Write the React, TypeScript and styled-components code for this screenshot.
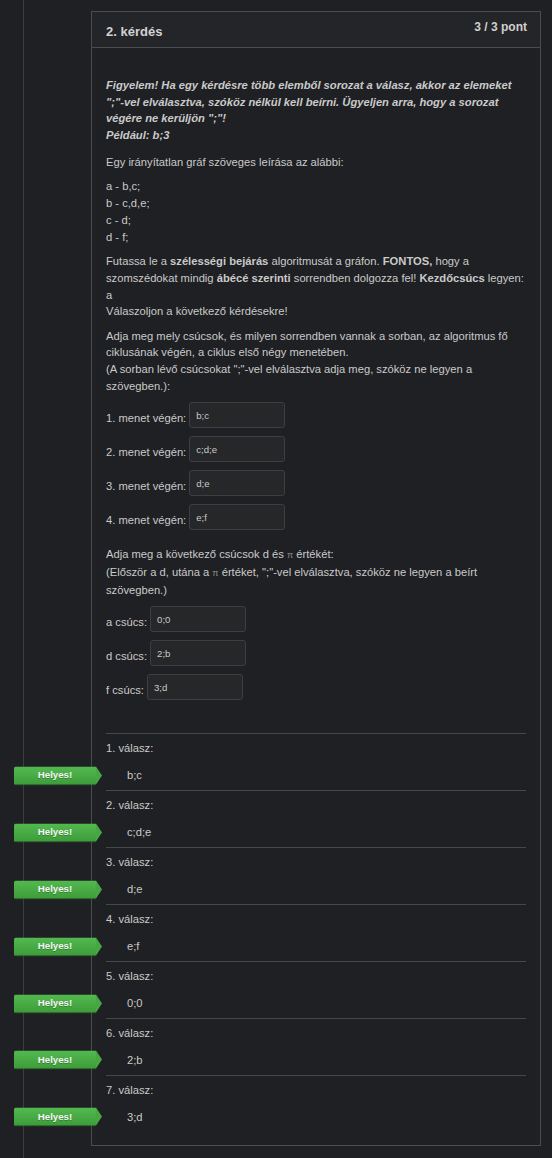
import React from "react";
import styled, { createGlobalStyle } from "styled-components";

const GlobalStyle = createGlobalStyle`
  html, body {
    margin: 0;
    padding: 0;
    background: #1f2023;
  }
  body {
    font-family: "Liberation Sans", Arial, sans-serif;
    color: #cacaca;
    -webkit-font-smoothing: antialiased;
  }
  * { box-sizing: border-box; }
`;

const Page = styled.div`
  position: relative;
  min-height: 1158px;
  padding: 11px 12px 0 91px;
  &::before {
    content: "";
    position: absolute;
    left: 23px;
    top: 0;
    bottom: 0;
    width: 1px;
    background: #3c3d40;
  }
`;

const Panel = styled.section`
  width: 450px;
  border: 1px solid #4b4c4f;
`;

const Header = styled.header`
  display: flex;
  justify-content: space-between;
  align-items: flex-start;
  height: 36px;
  padding: 0 13px 0 14px;
  background: #242528;
  border-bottom: 1px solid #4b4c4f;
`;

const Title = styled.h3`
  margin: 12px 0 0;
  font-size: 13px;
  line-height: 16px;
  font-weight: bold;
  color: #d2d2d2;
`;

const Grade = styled.div`
  margin-top: 8px;
  font-size: 12px;
  line-height: 14px;
  font-weight: bold;
  color: #cfcfcf;
`;

const Body = styled.div`
  padding: 29px 14px 13px;
  font-size: 11.2px;
  line-height: 16.8px;
`;

const Notice = styled.p`
  margin: 0 0 11px;
  font-weight: bold;
  font-style: italic;
  line-height: 16.5px;
`;

const Para = styled.p`
  margin: 0 0 7.5px;
`;

const Lines = styled.div`
  margin: 0 0 7.5px;
`;

const Line = styled.div``;

const Pi = styled.span`
  font-size: 9px;
  color: #8d8d8d;
`;

const Rows = styled.div<{ $after: number }>`
  display: flex;
  flex-direction: column;
  gap: 8px;
  margin: 1px 0 ${(p) => p.$after}px;
`;

const Row = styled.label`
  display: flex;
  align-items: center;
  gap: 3px;
`;

const RowLabel = styled.span`
  padding-top: 6px;
`;

const Field = styled.input`
  width: 96px;
  height: 26px;
  padding: 0 6px;
  background: #262729;
  border: 1px solid #3d3e41;
  border-radius: 3px;
  color: #cacaca;
  font-family: "Liberation Sans", Arial, sans-serif;
  font-size: 9.6px;
  outline: none;
`;

const Feedback = styled.div``;

const AnswerBlock = styled.div`
  border-top: 1px solid #46474a;
  padding: 6px 0 6.2px;
`;

const AnswerLabel = styled.div`
  margin-bottom: 10.2px;
`;

const AnswerValue = styled.div`
  position: relative;
  padding-left: 21px;
`;

const Badge = styled.span`
  position: absolute;
  left: -92px;
  top: 50%;
  transform: translateY(-50%);
  width: 82px;
  height: 19px;
  display: flex;
  align-items: center;
  justify-content: center;
  background: linear-gradient(#53ba4f, #3d9c3a);
  border-bottom: 1px solid #2e7a2b;
  border-radius: 2px 0 0 2px;
  color: #f4f4f4;
  font-size: 9.7px;
  font-weight: bold;
  text-shadow: 0 1px 0 rgba(0, 0, 0, 0.25);
  &::after {
    content: "";
    position: absolute;
    right: -6px;
    top: 0;
    border-top: 9.5px solid transparent;
    border-bottom: 9.5px solid transparent;
    border-left: 6px solid #45a842;
  }
`;

const menetek = [
  { label: "1. menet végén:", value: "b;c" },
  { label: "2. menet végén:", value: "c;d;e" },
  { label: "3. menet végén:", value: "d;e" },
  { label: "4. menet végén:", value: "e;f" },
];

const csucsok = [
  { label: "a csúcs:", value: "0;0" },
  { label: "d csúcs:", value: "2;b" },
  { label: "f csúcs:", value: "3;d" },
];

const answers = ["b;c", "c;d;e", "d;e", "e;f", "0;0", "2;b", "3;d"];

export default function App() {
  return (
    <>
      <GlobalStyle />
      <Page>
        <Panel>
          <Header>
            <Title>2. kérdés</Title>
            <Grade>3 / 3 pont</Grade>
          </Header>
          <Body>
            <Notice>
              Figyelem! Ha egy kérdésre több elemből sorozat a válasz, akkor az elemeket
              ";"-vel elválasztva, szóköz nélkül kell beírni. Ügyeljen arra, hogy a sorozat
              végére ne kerüljön ";"!
              <br />
              Például: b;3
            </Notice>
            <Para>Egy irányítatlan gráf szöveges leírása az alábbi:</Para>
            <Lines>
              <Line>a - b,c;</Line>
              <Line>b - c,d,e;</Line>
              <Line>c - d;</Line>
              <Line>d - f;</Line>
            </Lines>
            <Para>
              Futassa le a <b>szélességi bejárás</b> algoritmusát a gráfon. <b>FONTOS,</b> hogy a
              szomszédokat mindig <b>ábécé szerinti</b> sorrendben dolgozza fel! <b>Kezdőcsúcs</b>{" "}
              legyen: <br />a
              <br />
              Válaszoljon a következő kérdésekre!
            </Para>
            <Para>
              Adja meg mely csúcsok, és milyen sorrendben vannak a sorban, az algoritmus fő
              ciklusának végén, a ciklus első négy menetében.
              <br />
              (A sorban lévő csúcsokat ";"-vel elválasztva adja meg, szóköz ne legyen a
              szövegben.):
            </Para>
            <Rows $after={16}>
              {menetek.map((m) => (
                <Row key={m.label}>
                  <RowLabel>{m.label}</RowLabel>
                  <Field readOnly value={m.value} />
                </Row>
              ))}
            </Rows>
            <Para>
              Adja meg a következő csúcsok d és <Pi>π</Pi> értékét:
              <br />
              (Először a d, utána a <Pi>π</Pi> értéket, ";"-vel elválasztva, szóköz ne legyen a
              beírt szövegben.)
            </Para>
            <Rows $after={33}>
              {csucsok.map((c) => (
                <Row key={c.label}>
                  <RowLabel>{c.label}</RowLabel>
                  <Field readOnly value={c.value} />
                </Row>
              ))}
            </Rows>
            <Feedback>
              {answers.map((a, i) => (
                <AnswerBlock key={i}>
                  <AnswerLabel>{i + 1}. válasz:</AnswerLabel>
                  <AnswerValue>
                    <Badge>Helyes!</Badge>
                    {a}
                  </AnswerValue>
                </AnswerBlock>
              ))}
            </Feedback>
          </Body>
        </Panel>
      </Page>
    </>
  );
}
